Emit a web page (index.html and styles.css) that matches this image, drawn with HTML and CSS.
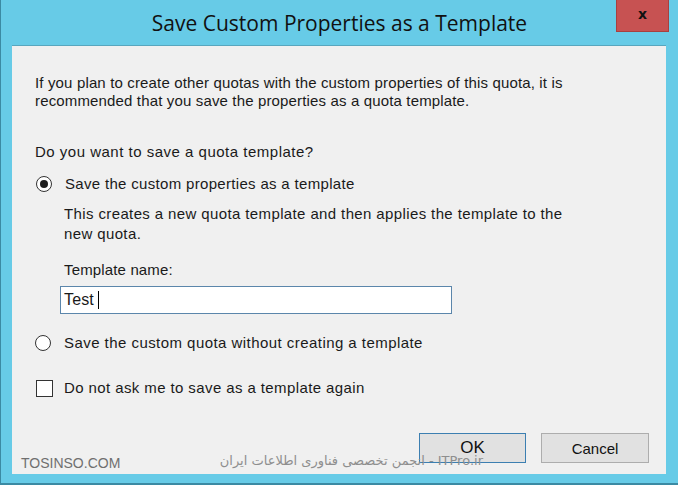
FILE: index.html
```html
<!DOCTYPE html>
<html lang="en">
<head>
    <meta charset="UTF-8">
    <meta name="viewport" content="width=device-width, initial-scale=1.0">
    <title>Save Custom Properties as a Template</title>
    <link rel="stylesheet" href="styles.css">
</head>
<body>
    <div class="window">
        <div class="titlebar">
            <span class="title">Save Custom Properties as a Template</span>
            <button class="close" type="button">x</button>
        </div>
        <div class="client">
            <p class="intro">If you plan to create other quotas with the custom properties of this quota, it is<br>recommended that you save the properties as a quota template.</p>
            <p class="question">Do you want to save a quota template?</p>

            <label class="option first">
                <span class="radio checked"></span>
                Save the custom properties as a template
            </label>
            <p class="hint">This creates a new quota template and then applies the template to the<br>new quota.</p>
            <p class="field-label">Template name:</p>
            <div class="textbox">Test <span class="caret"></span></div>

            <label class="option second">
                <span class="radio"></span>
                Save the custom quota without creating a template
            </label>

            <label class="option third">
                <span class="check"></span>
                Do not ask me to save as a template again
            </label>

            <div class="buttons">
                <button class="btn default" type="button">OK</button>
                <button class="btn" type="button">Cancel</button>
            </div>
        </div>
        <div class="mark-left">TOSINSO.COM</div>
        <div class="mark-right" dir="rtl">ITPro.ir - انجمن تخصصی فناوری اطلاعات ایران</div>
    </div>
</body>
</html>
```

FILE: styles.css
```css
body {
    margin: 0;
    font-family: "Liberation Sans", Arial, sans-serif;
    font-size: 15px;
    letter-spacing: 0.15px;
    color: #1a1a1a;
}
.window {
    position: relative;
    width: 678px;
    height: 485px;
    box-sizing: border-box;
    background: #67cbe7;
    border-left: 1px solid #3b8aa3;
    border-bottom: 2px solid #3b8aa3;
    overflow: hidden;
}
.titlebar {
    height: 45px;
    display: flex;
    justify-content: center;
    align-items: flex-start;
}
.title {
    font-family: "Open Sans", "Noto Sans", sans-serif;
    font-size: 21px;
    letter-spacing: 0;
    color: #111;
    margin-top: 9px;
}
.close {
    position: absolute;
    top: 0;
    left: 615px;
    width: 53px;
    height: 32px;
    border: 1px solid #a84040;
    border-top: none;
    background: #c75252;
    color: #111;
    font-family: "DejaVu Sans", sans-serif;
    font-weight: bold;
    font-size: 14px;
    padding: 0 0 3px;
    line-height: 28px;
}
.client {
    margin-left: 11px;
    width: 654px;
    height: 429px;
    box-sizing: border-box;
    background: #f0f0f0;
    border-top: 1px solid #58a6be;
    padding: 28px 17px 0 23px;
}
p {
    margin: 0;
}
.intro {
    line-height: 18px;
}
.question {
    margin-top: 33px;
    line-height: 18px;
    letter-spacing: 0.5px;
}
.option {
    display: flex;
    align-items: center;
    gap: 13px;
    height: 18px;
    line-height: 18px;
    letter-spacing: 0.4px;
}
.option.first {
    margin-top: 14px;
    margin-left: 1px;
    letter-spacing: 0.32px;
}
.option.second {
    margin-top: 20px;
    letter-spacing: 0.45px;
}
.option.third {
    margin-top: 27px;
    margin-left: 1px;
    gap: 11px;
}
.radio {
    width: 14px;
    height: 14px;
    border: 1px solid #333;
    border-radius: 50%;
    background: #fff;
    display: flex;
    align-items: center;
    justify-content: center;
    flex-shrink: 0;
}
.radio.checked::after {
    content: "";
    width: 8px;
    height: 8px;
    border-radius: 50%;
    background: #1e1e1e;
}
.check {
    width: 15px;
    height: 15px;
    border: 1px solid #333;
    background: #fff;
    flex-shrink: 0;
}
.hint {
    margin-top: 11px;
    margin-left: 29px;
    line-height: 20px;
    letter-spacing: 0.38px;
}
.field-label {
    margin-top: 17px;
    margin-left: 29px;
    line-height: 18px;
}
.textbox {
    margin-top: 7px;
    margin-left: 25px;
    width: 392px;
    height: 28px;
    box-sizing: border-box;
    border: 1px solid #5b86ab;
    background: #fff;
    padding-left: 3px;
    line-height: 26px;
    font-size: 16px;
    display: flex;
    align-items: center;
}
.caret {
    display: inline-block;
    width: 1px;
    height: 18px;
    background: #000;
    margin-left: 4px;
}
.buttons {
    display: flex;
    justify-content: flex-end;
    gap: 15px;
    margin-top: 36px;
}
.btn {
    width: 108px;
    height: 30px;
    border: 1px solid #adadad;
    background: #e1e1e1;
    font-family: "Liberation Sans", Arial, sans-serif;
    font-size: 15px;
    color: #111;
    padding: 0;
}
.btn.default {
    width: 107px;
    border: 1px solid #3c7fb1;
    font-size: 17px;
}
.mark-left {
    position: absolute;
    left: 20px;
    top: 455px;
    color: #6f6f6f;
    font-size: 14px;
    letter-spacing: 0;
}
.mark-right {
    position: absolute;
    left: 200px;
    top: 453px;
    width: 282px;
    color: #8e8e8e;
    font-family: "DejaVu Sans", sans-serif;
    font-size: 13px;
    letter-spacing: 0;
    white-space: nowrap;
}
```
